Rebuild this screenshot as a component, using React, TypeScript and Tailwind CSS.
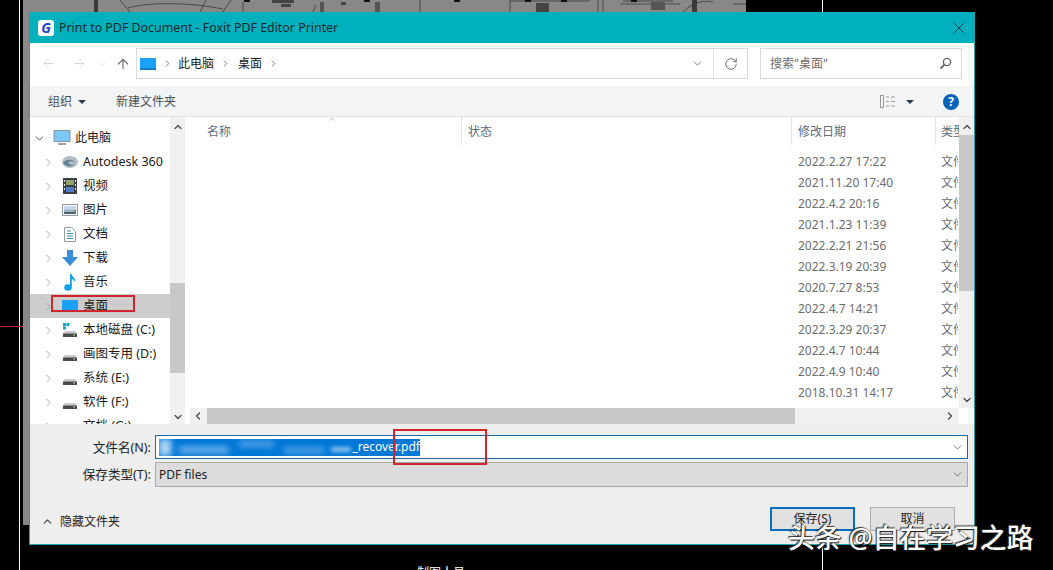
import { ChevronRight, ChevronDown, ChevronUp, ChevronLeft, ArrowLeft, ArrowRight, ArrowUp, RotateCw, X } from 'lucide-react';
import type { ReactNode } from 'react';

const font = "font-['Noto_Sans','Noto_Sans_CJK_SC',sans-serif]";

const dates = [
  '2022.2.27 17:22',
  '2021.11.20 17:40',
  '2022.4.2 20:16',
  '2021.1.23 11:39',
  '2022.2.21 21:56',
  '2022.3.19 20:39',
  '2020.7.27 8:53',
  '2022.4.7 14:21',
  '2022.3.29 20:37',
  '2022.4.7 10:44',
  '2022.4.9 10:40',
  '2018.10.31 14:17',
];

function Drive({ win }: { win?: boolean }) {
  return (
    <svg width="16" height="16" viewBox="0 0 16 16">
      {win && <rect x="1" y="1" width="3" height="3" fill="#14a3c7" />}
      {win && <rect x="4.5" y="1" width="3" height="3" fill="#14a3c7" />}
      {win && <rect x="1" y="4.5" width="3" height="3" fill="#14a3c7" />}
      <path d="M3 9h10l2 3H1z" fill="#c9c9c9" />
      <rect x="1" y="11.5" width="14" height="3.5" rx="0.5" fill="#4a4a4a" />
      <rect x="11" y="12.5" width="2" height="1" fill="#9fe08f" />
    </svg>
  );
}

function DesktopIcon({ w = 16, h = 12 }: { w?: number; h?: number }) {
  return (
    <svg width={w} height={h} viewBox="0 0 16 12">
      <rect width="16" height="12" fill="#1aa0f5" />
      <rect y="10.5" width="16" height="1.5" fill="#0f6cb5" />
    </svg>
  );
}

const tree: { label: string; icon: ReactNode; selected?: boolean }[] = [
  {
    label: 'Autodesk 360',
    icon: (
      <svg width="18" height="14" viewBox="0 0 18 14">
        <ellipse cx="9" cy="7" rx="8" ry="6" fill="#b4bcc4" />
        <path d="M2 8c3-4 9-4 12-1-3-1-6-1-7 1 1 2 4 2 7 1-3 3-9 3-12-1z" fill="#5f7f95" />
      </svg>
    ),
  },
  {
    label: '视频',
    icon: (
      <svg width="14" height="16" viewBox="0 0 14 16">
        <rect width="14" height="16" fill="#3a3f47" />
        <rect x="3" y="2" width="8" height="5" fill="#8fa56a" />
        <rect x="3" y="9" width="8" height="5" fill="#4f7fc2" />
        <path d="M1 2h1v2H1zM1 6h1v2H1zM1 10h1v2H1zM12 2h1v2h-1zM12 6h1v2h-1zM12 10h1v2h-1z" fill="#e8e8e8" />
      </svg>
    ),
  },
  {
    label: '图片',
    icon: (
      <svg width="16" height="12" viewBox="0 0 16 12">
        <rect x="0.5" y="0.5" width="15" height="11" fill="#fff" stroke="#8f9aa5" />
        <rect x="2" y="2" width="12" height="4" fill="#c3d9ea" />
        <path d="M2 6h12v4H2z" fill="#46606e" />
        <path d="M2 6c4-1 8 0 12 1v1H2z" fill="#9db3bf" />
      </svg>
    ),
  },
  {
    label: '文档',
    icon: (
      <svg width="12" height="15" viewBox="0 0 12 15">
        <path d="M.5.5h7l4 4v10H.5z" fill="#fff" stroke="#8f9aa5" />
        <path d="M3 4h4M3 6.5h6M3 9h6M3 11.5h6" stroke="#3f8fb5" />
      </svg>
    ),
  },
  {
    label: '下载',
    icon: (
      <svg width="16" height="16" viewBox="0 0 16 16">
        <path d="M5 0h6v7h5l-8 9-8-9h5z" fill="#3a8ddb" />
      </svg>
    ),
  },
  {
    label: '音乐',
    icon: (
      <svg width="12" height="17" viewBox="0 0 12 17">
        <ellipse cx="4" cy="13.5" rx="3.8" ry="3.2" fill="#15a0ea" />
        <path d="M6 0h1.5c.5 3 4.5 4 3.5 8-.8-2-2.5-3-3.2-3v8.5H6z" fill="#15a0ea" />
      </svg>
    ),
  },
  { label: '桌面', icon: <DesktopIcon />, selected: true },
  { label: '本地磁盘 (C:)', icon: <Drive win /> },
  { label: '画图专用 (D:)', icon: <Drive /> },
  { label: '系统 (E:)', icon: <Drive /> },
  { label: '软件 (F:)', icon: <Drive /> },
  { label: '文档 (G:)', icon: null },
];

function TreeRow({ label, icon, selected }: { label: string; icon: ReactNode; selected?: boolean }) {
  return (
    <div className={`flex h-6 shrink-0 items-center pl-3 ${selected ? 'bg-[#cdcdcd]' : ''}`}>
      <ChevronRight size={13} strokeWidth={1.5} className="text-[#9a9a9a]" />
      <div className="ml-1 flex w-[22px] justify-center">{icon}</div>
      <span className="ml-[2px] whitespace-nowrap text-[12.5px] text-[#1a1a1a]">{label}</span>
    </div>
  );
}

export default function App() {
  return (
    <div className={`relative h-[570px] w-[1053px] overflow-hidden bg-black ${font}`}>
      {/* cad drawing left behind the dialog */}
      <div className="absolute left-[19px] top-0 h-full w-px bg-white" />
      <div className="absolute left-[822px] top-0 h-full w-px bg-white" />
      <div className="absolute left-[23px] top-0 h-[525px] w-[723px] bg-[#8a8787]">
        <svg width="723" height="12" viewBox="0 0 723 12" className="block">
          <rect x="71" y="0" width="4" height="12" fill="#3a3a3a" />
          <path d="M97 0l10 12M105 8c20-6 60-6 95 1M177 12l6-12M200 12l8-12M220 2v10M290 12l3-7M397 0v12M487 0v12M575 0v12M580 0v12M660 12c10-10 20-12 30-10" stroke="#3a3838" strokeWidth="0.8" fill="none" />
          <path d="M487 1h80M597 4h60M710 4h13M600 1h50" stroke="#3a3838" strokeWidth="0.8" fill="none" />
          <rect x="221" y="0" width="6" height="2" fill="#111" />
          <rect x="249" y="0" width="22" height="3" fill="#444" />
          <rect x="258" y="4" width="10" height="3" fill="#444" />
          <rect x="297" y="2" width="4" height="10" fill="#555" />
          <rect x="318" y="2" width="5" height="3" fill="#444" />
          <rect x="341" y="0" width="6" height="2" fill="#111" />
          <rect x="352" y="2" width="5" height="10" fill="#555" />
          <rect x="431" y="0" width="6" height="2" fill="#111" />
          <rect x="502" y="0" width="6" height="2" fill="#111" />
          <rect x="513" y="3" width="13" height="9" fill="#444" />
          <rect x="538" y="0" width="6" height="2" fill="#111" />
          <rect x="608" y="0" width="6" height="2" fill="#111" />
          <rect x="628" y="2" width="14" height="8" fill="#555" />
          <rect x="669" y="0" width="5" height="12" fill="#3a3a3a" />
        </svg>
      </div>
      <div className="absolute left-0 top-[326px] h-px w-[23px] bg-[#b3262c]" />

      {/* dialog */}
      <div className="absolute left-[29px] top-3 flex h-[533px] w-[946px] flex-col border border-t-0 border-[#1fa5ad] bg-white">
        <div className="flex h-[31px] shrink-0 items-center bg-[#00b1bd] pl-2 pr-[5px]">
          <div className="flex h-4 w-4 items-center justify-center rounded-[3px] bg-white">
            <span className="text-[14px] font-bold italic leading-none text-[#2347c9]">G</span>
          </div>
          <span className="ml-[5px] pt-px text-[12.4px] text-[#16282e]">Print to PDF Document - Foxit PDF Editor Printer</span>
          <X size={20} strokeWidth={1} className="ml-auto text-[#12343a]" />
        </div>

        <div className="flex h-[43px] shrink-0 items-center pb-[2px] pl-[11px] pr-3">
          <ArrowLeft size={15} strokeWidth={1.5} className="text-[#d2d4d7]" />
          <ArrowRight size={15} strokeWidth={1.5} className="ml-4 text-[#d2d4d7]" />
          <ChevronDown size={10} strokeWidth={1.5} className="ml-[11px] text-[#d2d4d7]" />
          <ArrowUp size={16} strokeWidth={1.8} className="ml-[7px] text-[#6e7175]" />
          <div className="ml-[5px] flex h-[31px] w-[612px] items-center border border-[#d9d9d9] pl-[3px]">
            <DesktopIcon />
            <ChevronRight size={11} className="ml-[6px] text-[#777]" />
            <span className="ml-[5px] text-[12px] text-[#1a1a1a]">此电脑</span>
            <ChevronRight size={11} className="ml-[6px] text-[#777]" />
            <span className="ml-[7px] text-[12px] text-[#1a1a1a]">桌面</span>
            <ChevronRight size={11} className="ml-[6px] text-[#777]" />
            <ChevronDown size={13} strokeWidth={1.5} className="ml-auto mr-[9px] text-[#666]" />
            <div className="flex h-full w-[34px] items-center justify-center border-l border-[#e3e3e3]">
              <RotateCw size={14} strokeWidth={1.6} className="text-[#666]" />
            </div>
          </div>
          <div className="ml-3 flex h-[31px] w-[202px] items-center border border-[#d9d9d9] px-[9px]">
            <span className="text-[12px] text-[#6d6d6d]">搜索"桌面"</span>
            <svg width="13" height="13" viewBox="0 0 13 13" className="ml-auto">
              <circle cx="8" cy="5" r="3.6" fill="none" stroke="#666" strokeWidth="1.4" />
              <path d="M5.4 7.6L1.5 11.5" stroke="#666" strokeWidth="1.8" />
            </svg>
          </div>
        </div>

        <div className="flex h-[31px] shrink-0 items-center border-b border-[#e2e3e5] bg-[#f3f4f6] pl-[18px] pr-[15px] pt-px">
          <span className="text-[12px] text-[#4a4f55]">组织</span>
          <span className="ml-[6px] h-0 w-0 border-x-[4px] border-t-[4px] border-x-transparent border-t-[#2a3a4a]" />
          <span className="ml-[30px] text-[12px] text-[#4a4f55]">新建文件夹</span>
          <svg width="16" height="13" viewBox="0 0 16 13" className="ml-auto">
            <rect x="0.5" y="0.5" width="3" height="12" fill="none" stroke="#9a9a9a" />
            <path d="M6 2h3M11 2h4M6 6.5h3M11 6.5h4M6 11h3M11 11h4" stroke="#9a9a9a" />
          </svg>
          <span className="ml-[10px] h-0 w-0 border-x-[4px] border-t-[4px] border-x-transparent border-t-[#2a3a4a]" />
          <span className="ml-[29px] flex h-4 w-4 items-center justify-center rounded-full bg-[#0b63b8] text-[12px] font-bold leading-none text-white">?</span>
        </div>

        <div className="flex min-h-0 flex-1">
          {/* nav pane */}
          <div className="flex w-[140px] shrink-0 flex-col overflow-hidden pt-[9px]">
            <div className="flex h-6 shrink-0 items-center pl-[3px]">
              <ChevronDown size={13} strokeWidth={1.8} className="text-[#555]" />
              <svg width="18" height="16" viewBox="0 0 18 16" className="ml-[7px]">
                <rect x="1" y="0.5" width="16" height="11" fill="#7cc8f7" stroke="#8a949c" />
                <path d="M5 14h8" stroke="#9aa5ad" strokeWidth="2" />
              </svg>
              <span className="ml-[4px] text-[12px] text-[#1a1a1a]">此电脑</span>
            </div>
            {tree.map((t) => (
              <TreeRow key={t.label} {...t} />
            ))}
          </div>
          <div className="flex w-[15px] shrink-0 flex-col items-center bg-[#f0f0f0]">
            <ChevronUp size={12} strokeWidth={2.4} className="mt-[4px] h-[12px] text-[#444]" />
            <div className="mt-[150px] h-[90px] w-full bg-[#c8c8c8]" />
            <ChevronDown size={12} strokeWidth={2.4} className="mb-px mt-auto text-[#444]" />
          </div>

          {/* file list */}
          <div className="ml-[2px] flex min-w-0 flex-1 flex-col">
            <div className="flex min-h-0 flex-1">
              <div className="relative flex min-w-0 flex-1 flex-col overflow-hidden">
                <ChevronUp size={10} strokeWidth={1.2} className="absolute left-[140px] top-[-3px] text-[#777]" />
                <div className="flex h-[28px] shrink-0 text-[12px] text-[#5d6b7a]">
                  <div className="w-[274px] shrink-0 pl-5 pt-[6px]">名称</div>
                  <div className="w-[330px] shrink-0 border-l border-[#e5e5e5] pl-[6px] pt-[6px]">状态</div>
                  <div className="w-[144px] shrink-0 border-l border-[#e5e5e5] pl-[6px] pt-[6px]">修改日期</div>
                  <div className="w-[30px] shrink-0 overflow-hidden whitespace-nowrap border-l border-[#e5e5e5] pl-[5px] pt-[6px]">类型</div>
                </div>
                <div className="ml-[611px] mt-[6px] flex flex-col">
                  {dates.map((d) => (
                    <div key={d} className="flex h-[21px] shrink-0 items-center text-[12px] text-[#6d6d6d]">
                      <span className="w-[143px] whitespace-nowrap">{d}</span>
                      <span className="w-[17px] overflow-hidden whitespace-nowrap">文件</span>
                    </div>
                  ))}
                </div>
              </div>
              <div className="flex w-[15px] shrink-0 flex-col items-center bg-[#f0f0f0]">
                <ChevronUp size={12} strokeWidth={2.4} className="mt-[4px] text-[#444]" />
                <div className="mt-[2px] h-[156px] w-full bg-[#c8c8c8]" />
                <ChevronDown size={12} strokeWidth={2.4} className="mb-[2px] mt-auto text-[#444]" />
              </div>
            </div>
            <div className="flex h-4 shrink-0 items-center pl-[3px]">
              <div className="flex h-full flex-1 items-center bg-[#f0f0f0]">
                <ChevronLeft size={12} strokeWidth={2.4} className="ml-[2px] text-[#444]" />
                <div className="ml-[3px] h-full w-[588px] bg-[#c8c8c8]" />
                <ChevronRight size={12} strokeWidth={2.4} className="ml-auto mr-[3px] text-[#444]" />
              </div>
              <div className="w-[15px]" />
            </div>
          </div>
        </div>

        {/* save controls */}
        <div className="relative flex h-[120px] shrink-0 flex-col bg-[#eeeeee] pr-[6px]">
          <div className="mt-[11px] flex h-6 items-center">
            <span className="w-[121px] pt-[2px] text-right text-[12.6px] text-[#222]">文件名(N):</span>
            <div className="relative ml-1 flex h-6 flex-1 items-center border border-[#1769aa] bg-white pl-[3px]">
              <div className="relative flex h-[17px] w-[261px] items-center justify-end overflow-hidden bg-[#0078d7] text-[12px] text-white">
                <div className="absolute left-0 top-0 h-[17px] w-[12px] bg-[#b5d8f5] blur-[3px]" />
                <div className="absolute left-[20px] top-[8px] h-[6px] w-[50px] bg-[#7cb8ea] blur-[3px]" />
                <div className="absolute left-[80px] top-[2px] h-[6px] w-[35px] bg-[#5aa5e6] blur-[3px]" />
                <div className="absolute left-[125px] top-[9px] h-[5px] w-[40px] bg-[#64abe8] blur-[3px]" />
                <div className="absolute left-[172px] top-[8px] h-[5px] w-[20px] bg-[#8cc2ee] blur-[2px]" />
                <span className="relative pl-px">_recover.pdf</span>
              </div>
              <ChevronDown size={13} strokeWidth={1.3} className="ml-auto mr-[3px] text-[#444]" />
            </div>
          </div>
          <div className="mt-[3px] flex h-[25px] items-center">
            <span className="w-[121px] pt-[2px] text-right text-[12.6px] text-[#222]">保存类型(T):</span>
            <div className="ml-1 flex h-[25px] flex-1 items-center border border-[#a9a9a9] bg-[#dcdcdc] pl-[3px]">
              <span className="pt-px text-[12px] text-[#222]">PDF files</span>
              <ChevronDown size={13} strokeWidth={1.3} className="ml-auto mr-[3px] text-[#444]" />
            </div>
          </div>
          <div className="mt-5 flex h-6 items-center pl-[11px] pr-[13px]">
            <ChevronUp size={13} strokeWidth={2} className="mt-[5px] text-[#444]" />
            <span className="ml-[6px] mt-[5px] text-[12px] text-[#222]">隐藏文件夹</span>
            <button className="ml-auto h-6 w-[85px] border-2 border-[#0a6cbe] bg-[#e1e1e1] text-[12px] text-[#222]">保存(S)</button>
            <button className="ml-[15px] h-6 w-[85px] border border-[#adadad] bg-[#e1e1e1] text-[12px] text-[#222]">取消</button>
          </div>
          {/* red annotation */}
          <div className="absolute left-[363px] top-[5px] h-9 w-[94px] border-2 border-[#d0252b]" />
        </div>
      </div>

      <div className="absolute left-[51px] top-[295px] h-[17px] w-[84px] border-2 border-[#d0252b]" />
      <span className="absolute left-[417px] top-[565px] whitespace-nowrap text-[12px] leading-4 text-white">制图人员</span>
      <span className="absolute left-[788px] top-[520px] whitespace-nowrap text-[26.8px] font-medium leading-[36px] text-white [text-shadow:1px_1px_1px_#111,-1px_-1px_1px_#333]">头条 @自在学习之路</span>
    </div>
  );
}
